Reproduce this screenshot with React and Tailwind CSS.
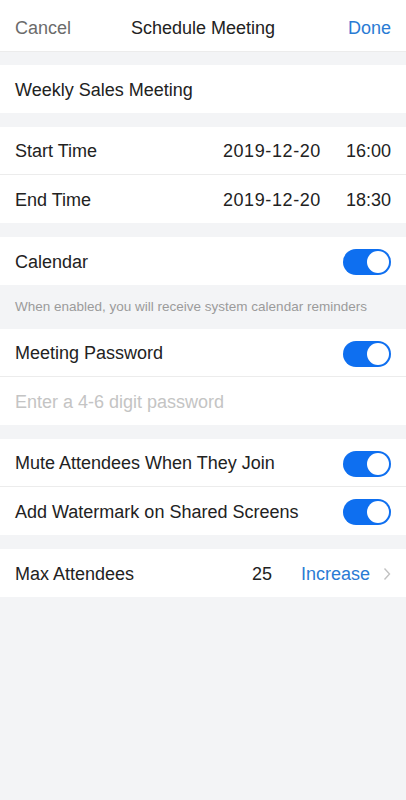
import React, { useState } from 'react';

const Toggle = ({ on, onChange }) => (
  <button
    onClick={onChange}
    className={`relative w-[48px] h-[26px] rounded-full shrink-0 ${on ? 'bg-[#0e6ff0]' : 'bg-[#e5e5ea]'}`}
  >
    <span
      className={`absolute top-[2px] w-[22px] h-[22px] rounded-full bg-white ${on ? 'left-[24px]' : 'left-[2px]'}`}
    />
  </button>
);

const Row = ({ children, border }) => (
  <div className={`flex items-center h-[48px] px-[15px] pt-[2px] bg-white ${border ? 'border-b border-[#ececec]' : ''}`}>
    {children}
  </div>
);

const App = () => {
  const [toggles, setToggles] = useState({ calendar: true, password: true, mute: true, watermark: true });
  const flip = (k) => setToggles({ ...toggles, [k]: !toggles[k] });

  return (
    <div
      className="min-h-[800px] bg-[#f3f4f6] text-[18px] text-[#222]"
      style={{ fontFamily: '"Liberation Sans", Arial, sans-serif' }}
    >
      {/* Header */}
      <div className="flex items-center justify-between h-[52px] px-[15px] pt-[6px] bg-white border-b border-[#ececec]">
        <span className="text-[#6b6b6b] w-[80px]">Cancel</span>
        <span className="text-[#222]">Schedule Meeting</span>
        <span className="text-[#2a7bd4] w-[80px] text-right">Done</span>
      </div>

      <div className="h-[13px]" />
      <Row>
        <span>Weekly Sales Meeting</span>
      </Row>

      <div className="h-[14px]" />
      <Row border>
        <span className="flex-1">Start Time</span>
        <span className="mr-[25px] tracking-[0.6px]">2019-12-20</span>
        <span>16:00</span>
      </Row>
      <Row>
        <span className="flex-1">End Time</span>
        <span className="mr-[25px] tracking-[0.6px]">2019-12-20</span>
        <span>18:30</span>
      </Row>

      <div className="h-[14px]" />
      <Row>
        <span className="flex-1">Calendar</span>
        <Toggle on={toggles.calendar} onChange={() => flip('calendar')} />
      </Row>
      <div className="h-[44px] flex items-center px-[15px] text-[13.5px] text-[#9b9b9b]">
        When enabled, you will receive system calendar reminders
      </div>
      <Row border>
        <span className="flex-1">Meeting Password</span>
        <Toggle on={toggles.password} onChange={() => flip('password')} />
      </Row>
      <Row>
        <input
          type="text"
          placeholder="Enter a 4-6 digit password"
          className="w-full outline-none bg-transparent placeholder:text-[#c4c4c4]"
        />
      </Row>

      <div className="h-[14px]" />
      <Row border>
        <span className="flex-1">Mute Attendees When They Join</span>
        <Toggle on={toggles.mute} onChange={() => flip('mute')} />
      </Row>
      <Row>
        <span className="flex-1">Add Watermark on Shared Screens</span>
        <Toggle on={toggles.watermark} onChange={() => flip('watermark')} />
      </Row>

      <div className="h-[14px]" />
      <Row>
        <span className="flex-1">Max Attendees</span>
        <span className="mr-[29px]">25</span>
        <span className="text-[#2a7bd4]">Increase</span>
        <svg width="8" height="14" viewBox="0 0 8 14" className="ml-[13px]">
          <path d="M1.5 1.5 L6.5 7 L1.5 12.5" fill="none" stroke="#c2c2c2" strokeWidth="1.4" />
        </svg>
      </Row>
    </div>
  );
};

export default App;
